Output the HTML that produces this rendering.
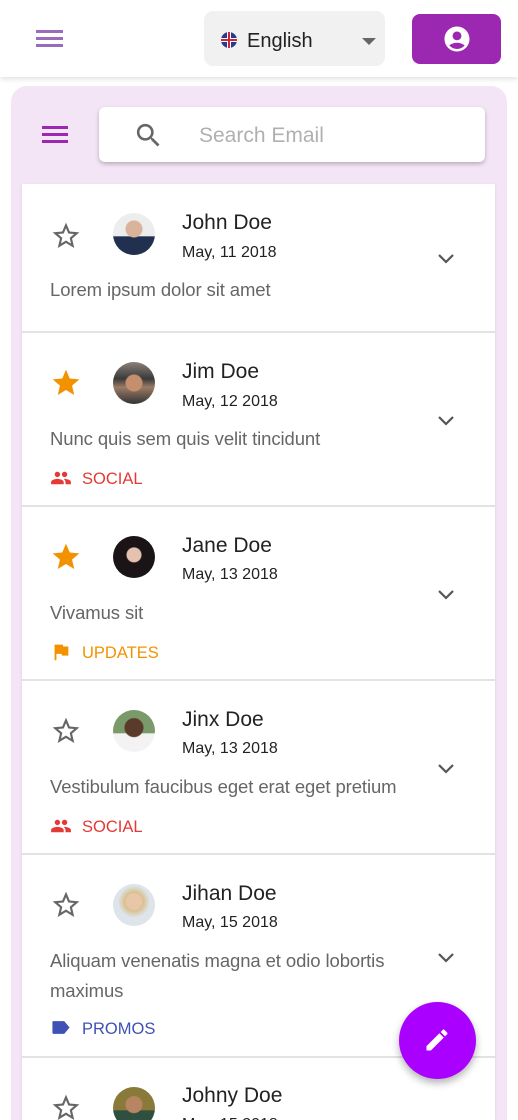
<!DOCTYPE html>
<html><head><meta charset="utf-8"><style>
*{margin:0;padding:0;box-sizing:border-box}
html,body{width:518px;height:1120px;overflow:hidden}
body{background:#fff;font-family:"Liberation Sans",sans-serif;position:relative}
.a{position:absolute}
.hdr{left:0;top:0;width:518px;height:77px;background:#fff;box-shadow:0 2px 5px rgba(0,0,0,.12);z-index:2}
.panel{left:11px;top:86px;width:496px;height:1034px;background:#f3e5f5;border-radius:16px 16px 0 0}
.list{left:22px;top:184px;width:473px;height:936px;background:#fff;box-shadow:0 1px 3px rgba(0,0,0,.1)}
.sep{left:22px;width:473px;height:2px;background:#e3e3e3}
.name{left:182px;font-size:21px;color:#222;line-height:24px}
.date{left:182px;font-size:16px;color:#222;line-height:20px}
.snip{left:50px;font-size:18.5px;color:#666;line-height:30px;width:390px;letter-spacing:-0.1px}
.tag{left:82px;font-size:16.5px;line-height:20px}
.av{width:42px;height:42px;border-radius:50%;left:113px}
.st{width:32px;height:32px;left:50px}
</style></head><body>
<div class="a hdr">
<svg class="a" style="left:36px;top:28px" width="28" height="22" viewBox="0 0 28 22"><rect y="2" width="27" height="3" fill="#9b6bbd"/><rect y="9" width="27" height="3" fill="#9b6bbd"/><rect y="16" width="27" height="3" fill="#9b6bbd"/></svg>
<div class="a" style="left:204px;top:11px;width:181px;height:55px;background:#f1f1f1;border-radius:9px"></div>
<svg class="a" style="left:221px;top:32px" width="16" height="16" viewBox="0 0 16 16"><circle cx="8" cy="8" r="8" fill="#2a3a8c"/><path d="M0 8h16M8 0v16" stroke="#fff" stroke-width="4"/><path d="M0 8h16M8 0v16" stroke="#d0243a" stroke-width="2"/></svg>
<div class="a" style="left:247px;top:30px;font-size:20px;color:#222">English</div>
<svg class="a" style="left:362px;top:38px" width="14" height="8"><path d="M0 0h14L7 7z" fill="#666"/></svg>
<div class="a" style="left:412px;top:14px;width:89px;height:50px;background:#9c27b0;border-radius:8px"></div>
<svg class="a" style="left:442px;top:24px" width="30" height="30" viewBox="0 0 24 24"><path fill="#fff" d="M12 2C6.48 2 2 6.48 2 12s4.48 10 10 10 10-4.48 10-10S17.52 2 12 2zm0 4c1.930 0 3.5 1.57 3.5 3.5S13.93 13 12 13s-3.5-1.57-3.5-3.5S10.07 6 12 6zm0 14c-2.03 0-4.430-.82-6.14-2.88C7.55 15.8 9.68 15 12 15s4.45.8 6.14 2.12C16.43 19.18 14.03 20 12 20z"/></svg>
</div>
<div class="a panel"></div>
<svg class="a" style="left:42px;top:125px" width="28" height="22"><rect y="1" width="26" height="3" fill="#9c27b0"/><rect y="8" width="26" height="3" fill="#9c27b0"/><rect y="15" width="26" height="3" fill="#9c27b0"/></svg>
<div class="a" style="left:99px;top:107px;width:386px;height:55px;background:#fff;border-radius:6px;box-shadow:0 2px 4px rgba(0,0,0,.25)"></div>
<svg class="a" style="left:133px;top:120px" width="31" height="31" viewBox="0 0 24 24"><path fill="#666" d="M15.5 14h-.79l-.28-.27A6.47 6.47 0 0 0 16 9.5 6.5 6.5 0 1 0 9.5 16c1.610 0 3.090-.59 4.230-1.57l.27.28v.79l5 4.99L20.49 19l-4.990-5zm-6 0C7.01 14 5 11.99 5 9.5S7.01 5 9.5 5 14 7.01 14 9.5 11.99 14 9.5 14z"/></svg>
<div class="a" style="left:199px;top:124px;font-size:21px;color:#b0b0b0">Search Email</div>
<div class="a list"></div>
<div class="a sep" style="top:331px"></div>
<div class="a sep" style="top:505px"></div>
<div class="a sep" style="top:679px"></div>
<div class="a sep" style="top:853px"></div>
<div class="a sep" style="top:1056px"></div>

<svg class="a st" style="top:220px" viewBox="0 0 24 24"><path fill="#666" d="M22 9.24l-7.19-.62L12 2 9.19 8.63 2 9.24l5.46 4.73L5.82 21 12 17.27 18.18 21l-1.63-7.03L22 9.24zM12 15.4l-3.76 2.27 1-4.28-3.32-2.88 4.38-.38L12 6.1l1.71 4.04 4.38.38-3.32 2.88 1 4.28L12 15.4z"/></svg>
<svg class="a st" style="top:367px" viewBox="0 0 24 24"><path fill="#f39200" d="M12 17.27L18.18 21l-1.64-7.03L22 9.24l-7.19-.61L12 2 9.19 8.63 2 9.24l5.46 4.73L5.82 21z"/></svg>
<svg class="a st" style="top:541px" viewBox="0 0 24 24"><path fill="#f39200" d="M12 17.27L18.18 21l-1.64-7.03L22 9.24l-7.19-.61L12 2 9.19 8.63 2 9.24l5.46 4.73L5.82 21z"/></svg>
<svg class="a st" style="top:715px" viewBox="0 0 24 24"><path fill="#666" d="M22 9.24l-7.19-.62L12 2 9.19 8.63 2 9.24l5.46 4.73L5.82 21 12 17.27 18.18 21l-1.63-7.03L22 9.24zM12 15.4l-3.76 2.27 1-4.28-3.32-2.88 4.38-.38L12 6.1l1.71 4.04 4.38.38-3.32 2.88 1 4.28L12 15.4z"/></svg>
<svg class="a st" style="top:889px" viewBox="0 0 24 24"><path fill="#666" d="M22 9.24l-7.19-.62L12 2 9.19 8.63 2 9.24l5.46 4.73L5.82 21 12 17.27 18.18 21l-1.63-7.03L22 9.24zM12 15.4l-3.76 2.27 1-4.28-3.32-2.88 4.38-.38L12 6.1l1.71 4.04 4.38.38-3.32 2.88 1 4.28L12 15.4z"/></svg>
<svg class="a st" style="top:1092px" viewBox="0 0 24 24"><path fill="#666" d="M22 9.24l-7.19-.62L12 2 9.19 8.63 2 9.24l5.46 4.73L5.82 21 12 17.27 18.18 21l-1.63-7.03L22 9.24zM12 15.4l-3.76 2.27 1-4.28-3.32-2.88 4.38-.38L12 6.1l1.71 4.04 4.38.38-3.32 2.88 1 4.28L12 15.4z"/></svg>

<div class="a av" style="top:213px;background:radial-gradient(circle at 50% 38%,#d9b39a 0 8px,transparent 9px),linear-gradient(#eceeee 55%,#22304f 56%)"></div>
<div class="a av" style="top:362px;background:radial-gradient(circle at 50% 50%,#c58f6e 0 8px,transparent 9px),linear-gradient(#8a8078 0,#3a3a3a 40%,#9a7b66 60%,#333 100%)"></div>
<div class="a av" style="top:536px;background:radial-gradient(circle at 50% 45%,#e5c2b0 0 7px,#1a1416 8px)"></div>
<div class="a av" style="top:710px;background:radial-gradient(circle at 50% 42%,#5a3a2a 0 9px,transparent 10px),linear-gradient(#7a9a6a 55%,#f3f3f3 56%)"></div>
<div class="a av" style="top:884px;background:radial-gradient(circle at 50% 42%,#e8c7a8 0 8px,#d8c08a 9px,#dde4ea 16px)"></div>
<div class="a av" style="top:1087px;background:radial-gradient(circle at 50% 42%,#b88563 0 8px,transparent 9px),linear-gradient(#8a7a3a 55%,#2f5040 56%)"></div>

<div class="a name" style="top:211px">John Doe</div><div class="a date" style="top:243px">May, 11 2018</div>
<div class="a name" style="top:360px">Jim Doe</div><div class="a date" style="top:392px">May, 12 2018</div>
<div class="a name" style="top:534px">Jane Doe</div><div class="a date" style="top:565px">May, 13 2018</div>
<div class="a name" style="top:708px">Jinx Doe</div><div class="a date" style="top:739px">May, 13 2018</div>
<div class="a name" style="top:882px">Jihan Doe</div><div class="a date" style="top:913px">May, 15 2018</div>
<div class="a name" style="top:1084px">Johny Doe</div><div class="a date" style="top:1115px">May, 15 2018</div>

<div class="a snip" style="top:275px">Lorem ipsum dolor sit amet</div>
<div class="a snip" style="top:424px">Nunc quis sem quis velit tincidunt</div>
<div class="a snip" style="top:598px">Vivamus sit</div>
<div class="a snip" style="top:772px">Vestibulum faucibus eget erat eget pretium</div>
<div class="a snip" style="top:946px">Aliquam venenatis magna et odio lobortis maximus</div>

<svg class="a" style="left:50px;top:469px" width="22" height="18" viewBox="0 0 24 20"><path fill="#e53935" d="M16 9c1.66 0 2.99-1.34 2.99-3S17.66 3 16 3c-1.66 0-3 1.34-3 3s1.34 3 3 3zm-8 0c1.66 0 2.99-1.34 2.99-3S9.66 3 8 3C6.34 3 5 4.34 5 6s1.34 3 3 3zm0 2c-2.33 0-7 1.17-7 3.5V17h14v-2.5c0-2.33-4.67-3.5-7-3.5zm8 0c-.29 0-.62.02-.97.05 1.16.84 1.97 1.97 1.97 3.45V17h6v-2.5c0-2.33-4.67-3.5-7-3.5z"/></svg>
<div class="a tag" style="top:469px;color:#e53935">SOCIAL</div>
<svg class="a" style="left:50px;top:641px" width="22" height="22" viewBox="0 0 24 24"><path fill="#f39200" d="M14.4 6L14 4H5v17h2v-7h5.6l.4 2h7V6z"/></svg>
<div class="a tag" style="top:643px;color:#f39200">UPDATES</div>
<svg class="a" style="left:50px;top:817px" width="22" height="18" viewBox="0 0 24 20"><path fill="#e53935" d="M16 9c1.66 0 2.99-1.34 2.99-3S17.66 3 16 3c-1.66 0-3 1.34-3 3s1.34 3 3 3zm-8 0c1.66 0 2.99-1.34 2.99-3S9.66 3 8 3C6.34 3 5 4.34 5 6s1.34 3 3 3zm0 2c-2.33 0-7 1.17-7 3.5V17h14v-2.5c0-2.33-4.67-3.5-7-3.5zm8 0c-.29 0-.62.02-.97.05 1.16.84 1.970 1.97 1.97 3.45V17h6v-2.5c0-2.33-4.67-3.5-7-3.5z"/></svg>
<div class="a tag" style="top:817px;color:#e53935">SOCIAL</div>
<svg class="a" style="left:51px;top:1020px" width="20" height="15" viewBox="0 0 18 14"><path fill="#3f51b5" d="M2 1h10l5 6-5 6H2a1 1 0 0 1-1-1V2a1 1 0 0 1 1-1z"/></svg>
<div class="a tag" style="top:1019px;color:#3f51b5">PROMOS</div>

<svg class="a" style="left:437px;top:253px" width="18" height="11"><path d="M2 2l7 7 7-7" stroke="#555" stroke-width="2.2" fill="none"/></svg>
<svg class="a" style="left:437px;top:415px" width="18" height="11"><path d="M2 2l7 7 7-7" stroke="#555" stroke-width="2.2" fill="none"/></svg>
<svg class="a" style="left:437px;top:589px" width="18" height="11"><path d="M2 2l7 7 7-7" stroke="#555" stroke-width="2.2" fill="none"/></svg>
<svg class="a" style="left:437px;top:763px" width="18" height="11"><path d="M2 2l7 7 7-7" stroke="#555" stroke-width="2.2" fill="none"/></svg>
<svg class="a" style="left:437px;top:952px" width="18" height="11"><path d="M2 2l7 7 7-7" stroke="#555" stroke-width="2.2" fill="none"/></svg>

<div class="a" style="left:399px;top:1002px;width:77px;height:77px;border-radius:50%;background:#aa00ff;box-shadow:0 4px 8px rgba(0,0,0,.3)"></div>
<svg class="a" style="left:423px;top:1026px" width="28" height="28" viewBox="0 0 24 24"><path fill="#fff" d="M3 17.25V21h3.75L17.81 9.94l-3.75-3.75L3 17.25zM20.71 7.04a1 1 0 0 0 0-1.41l-2.34-2.34a1 1 0 0 0-1.41 0l-1.83 1.83 3.75 3.75 1.83-1.83z"/></svg>
</body></html>
